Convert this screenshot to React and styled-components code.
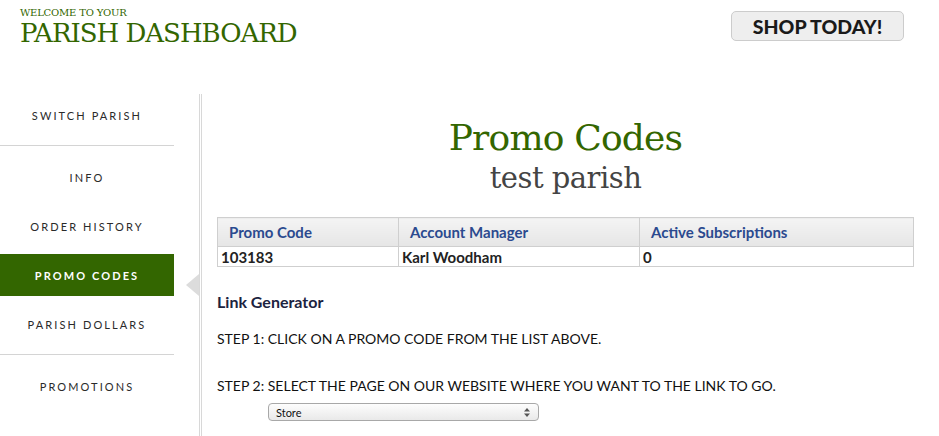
import React from 'react'
import styled, { createGlobalStyle } from 'styled-components'

const GlobalStyle = createGlobalStyle`
  body {
    margin: 0;
    background: #fff;
    font-family: 'Lato', 'Liberation Sans', sans-serif;
    color: #222;
  }
`

const navItems = [
  { group: 1, label: 'SWITCH PARISH' },
  { group: 2, label: 'INFO' },
  { group: 2, label: 'ORDER HISTORY' },
  { group: 2, label: 'PROMO CODES', active: true },
  { group: 2, label: 'PARISH DOLLARS' },
  { group: 3, label: 'PROMOTIONS' }
]

const promoRows = [
  { code: '103183', manager: 'Karl Woodham', active: '0' }
]

export default function App() {
  const groups = [1, 2, 3].map((g) => navItems.filter((i) => i.group === g))

  return (
    <>
      <GlobalStyle />
      <Header>
        <Brand>
          <Welcome>WELCOME TO YOUR</Welcome>
          <BrandTitle>PARISH DASHBOARD</BrandTitle>
        </Brand>
        <ShopButton>SHOP TODAY!</ShopButton>
      </Header>

      <Layout>
        <Sidebar>
          {groups.map((items, gi) => (
            <NavGroup key={gi} $last={gi === groups.length - 1}>
              {items.map((item) => (
                <NavItem key={item.label} $active={item.active}>
                  {item.label}
                  {item.active && <Pointer />}
                </NavItem>
              ))}
            </NavGroup>
          ))}
        </Sidebar>

        <Main>
          <PageTitle>Promo Codes</PageTitle>
          <SubTitle>test parish</SubTitle>

          <Table>
            <colgroup>
              <col style={{ width: 181 }} />
              <col style={{ width: 241 }} />
              <col />
            </colgroup>
            <thead>
              <tr>
                <Th>Promo Code</Th>
                <Th>Account Manager</Th>
                <Th>Active Subscriptions</Th>
              </tr>
            </thead>
            <tbody>
              {promoRows.map((r) => (
                <tr key={r.code}>
                  <Td>{r.code}</Td>
                  <Td>{r.manager}</Td>
                  <Td>{r.active}</Td>
                </tr>
              ))}
            </tbody>
          </Table>

          <SectionTitle>Link Generator</SectionTitle>
          <Step>STEP 1: CLICK ON A PROMO CODE FROM THE LIST ABOVE.</Step>
          <Step $gap>STEP 2: SELECT THE PAGE ON OUR WEBSITE WHERE YOU WANT TO THE LINK TO GO.</Step>
          <SelectBox>
            <span>Store</span>
            <Arrows>
              <svg width="6" height="9" viewBox="0 0 6 9">
                <path d="M3 0 L6 3.5 H0 Z" fill="#555" />
                <path d="M3 9 L6 5.5 H0 Z" fill="#555" />
              </svg>
            </Arrows>
          </SelectBox>
        </Main>
      </Layout>
    </>
  )
}

const Header = styled.header`
  display: flex;
  justify-content: space-between;
  align-items: flex-start;
  height: 94px;
  padding: 0 35px 0 20px;
  box-sizing: border-box;
`

const Brand = styled.div`
  display: flex;
  flex-direction: column;
  padding-top: 7px;
  color: #336600;
  font-family: 'DejaVu Serif', 'Liberation Serif', serif;
`

const Welcome = styled.div`
  font-size: 10px;
  line-height: 11px;
  letter-spacing: -0.2px;
`

const BrandTitle = styled.div`
  font-size: 26px;
  line-height: 30px;
  letter-spacing: -1px;
`

const ShopButton = styled.button`
  margin-top: 11px;
  width: 173px;
  height: 30px;
  background: #eeeeee;
  border: 1px solid #cccccc;
  border-radius: 5px;
  font-family: 'Lato', 'Liberation Sans', sans-serif;
  font-weight: 900;
  font-size: 19.5px;
  color: #1a1a1a;
  padding: 0;
  letter-spacing: 0;
`

const Layout = styled.div`
  display: flex;
  align-items: stretch;
  min-height: 342px;
`

const Sidebar = styled.nav`
  width: 174px;
  flex: none;
  margin-right: 25px;
`

const NavGroup = styled.div`
  border-bottom: ${(p) => (p.$last ? 'none' : '1px solid #d4d4d4')};
  padding: 10px 0 2px;
  &:first-child {
    padding-top: 0;
  }
`

const NavItem = styled.div`
  position: relative;
  height: 42px;
  margin-bottom: 7px;
  display: flex;
  align-items: center;
  justify-content: center;
  font-size: 11px;
  letter-spacing: 2.1px;
  font-weight: ${(p) => (p.$active ? 700 : 400)};
  color: ${(p) => (p.$active ? '#fff' : '#2a2a2a')};
  background: ${(p) => (p.$active ? '#336600' : 'transparent')};
`

const Pointer = styled.span`
  position: absolute;
  left: 186px;
  top: 20px;
  width: 0;
  height: 0;
  border-top: 11px solid transparent;
  border-bottom: 11px solid transparent;
  border-right: 13px solid #dcdcdc;
`

const Main = styled.main`
  flex: 1;
  border-left: 3px double #d8d8d8;
  padding: 24px 25px 0 15px;
  display: flex;
  flex-direction: column;
`

const PageTitle = styled.h1`
  margin: 0;
  text-align: center;
  font-family: 'DejaVu Serif', 'Liberation Serif', serif;
  font-weight: 400;
  font-size: 36px;
  line-height: 40px;
  color: #336600;
  letter-spacing: -0.8px;
`

const SubTitle = styled.h2`
  margin: 3px 0 0;
  text-align: center;
  font-family: 'DejaVu Serif', 'Liberation Serif', serif;
  font-weight: 400;
  font-size: 29px;
  line-height: 34px;
  color: #444;
  letter-spacing: -0.5px;
`

const Table = styled.table`
  margin-top: 22px;
  width: 697px;
  border-collapse: collapse;
  table-layout: fixed;
  font-size: 15px;
`

const Th = styled.th`
  height: 28px;
  padding: 0 11px;
  text-align: left;
  font-weight: 700;
  color: #2b4a8f;
  border: 1px solid #cfcfcf;
  background: linear-gradient(#f4f4f4, #e6e6e6);
`

const Td = styled.td`
  height: 19px;
  padding: 0 3px;
  font-weight: 700;
  color: #222;
  border: 1px solid #cfcfcf;
`

const SectionTitle = styled.h3`
  margin: 26px 0 0;
  font-size: 16px;
  line-height: 18px;
  font-weight: 700;
  color: #1c2340;
`

const Step = styled.p`
  margin: ${(p) => (p.$gap ? '30px 0 0' : '19px 0 0')};
  font-size: 14px;
  line-height: 17px;
  color: #111;
`

const SelectBox = styled.div`
  margin: 9px 0 0 51px;
  width: 254px;
  height: 16px;
  border: 1px solid #a8a8a8;
  border-radius: 4px;
  background: linear-gradient(#fdfdfd, #e9e9e9);
  display: flex;
  align-items: center;
  justify-content: space-between;
  padding: 0 8px 0 7px;
  box-sizing: content-box;
  font-size: 11px;
  color: #111;
`

const Arrows = styled.span`
  display: flex;
  align-items: center;
`
